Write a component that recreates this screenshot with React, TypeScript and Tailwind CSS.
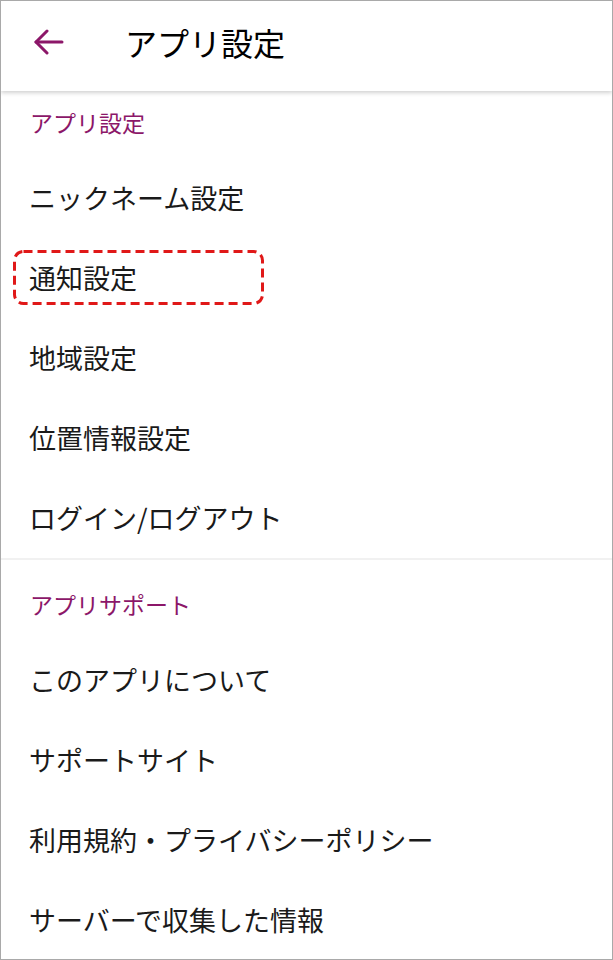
const font = { fontFamily: '"Noto Sans CJK JP", "Noto Sans", sans-serif' };

const settings = ['ニックネーム設定', '通知設定', '地域設定', '位置情報設定', 'ログイン/ログアウト'];
const support = ['このアプリについて', 'サポートサイト', '利用規約・プライバシーポリシー', 'サーバーで収集した情報'];

// dashed red annotation around the highlighted row
const Marker = () => (
  <svg className="absolute left-[12px] top-[12px]" width="251" height="55" viewBox="0 0 251 55">
    <rect x="1.5" y="1.5" width="248" height="52" rx="9" fill="none" stroke="#e01818" strokeWidth="3" strokeDasharray="9 5" />
  </svg>
);

const Row = ({ label, marked }: { label: string; marked?: boolean }) => (
  <div className="relative h-[80px] flex items-center pl-[28px] text-[27px] text-[#1a1a1a]">
    {label}
    {marked && <Marker />}
  </div>
);

export default function App() {
  return (
    <div style={font} className="w-[613px] h-[960px] bg-white border border-[#a9a9a9] overflow-hidden">
      {/* Top bar */}
      <div className="relative z-10 h-[90px] flex items-center pb-[8px] bg-white shadow-[0_2px_4px_rgba(0,0,0,0.18)]">
        <svg className="ml-[33px]" width="30" height="26" viewBox="0 0 30 26" fill="none" stroke="#8c1769" strokeWidth="3" strokeLinecap="round" strokeLinejoin="round">
          <path d="M13 2 2 13l11 11" />
          <path d="M2 13h26" />
        </svg>
        <h1 className="ml-[61px] text-[32px] text-black">アプリ設定</h1>
      </div>

      {/* App settings */}
      <div className="h-[67px] flex items-end pb-[19px] pl-[29px] text-[23px] text-[#8c1769]">アプリ設定</div>
      {settings.map((s) => (
        <Row key={s} label={s} marked={s === '通知設定'} />
      ))}

      <div className="h-[2px] bg-[#f1f1f1]" />

      {/* App support */}
      <div className="h-[80px] flex items-end pb-[19px] pl-[29px] text-[23px] text-[#8c1769]">アプリサポート</div>
      {support.map((s) => (
        <Row key={s} label={s} />
      ))}
    </div>
  );
}
